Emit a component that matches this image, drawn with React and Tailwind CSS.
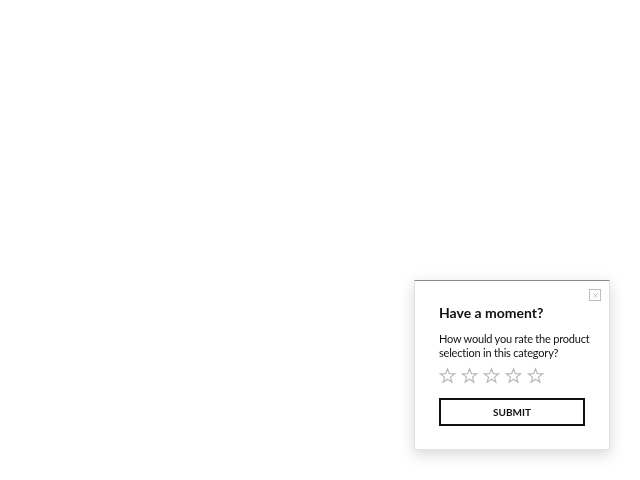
import { X } from "lucide-react";

function Star() {
  return (
    <svg width="17" height="17" viewBox="0 0 24 24" fill="none" stroke="#b5b5b5" strokeWidth="1.6" strokeLinejoin="miter">
      <path d="M12 2.5l2.6 6.9 7.4.3-5.8 4.6 2 7.1L12 17.3l-6.2 4.1 2-7.1L2 9.7l7.4-.3z" />
    </svg>
  );
}

export default function App() {
  return (
    <div className="min-h-screen bg-white" style={{ fontFamily: "Lato, 'Liberation Sans', sans-serif" }}>
      <div className="fixed right-[30px] bottom-[30px] w-[196px] border border-[#e2e2e2] border-t-[#8a8a8a] bg-white shadow-[0_4px_14px_rgba(0,0,0,0.16)]">
        <div className="flex justify-end pt-[8px] pr-[8px]">
          <button type="button" className="flex h-[12px] w-[12px] items-center justify-center border border-[#bdbdbd] text-[#9a9a9a]">
            <X size={7} strokeWidth={2} />
          </button>
        </div>
        <div className="px-[24px] pb-[23px]">
          <h2 className="mt-[3px] text-[14px] font-bold leading-[18px] text-[#111]">Have a moment?</h2>
          <p className="mt-[10px] mr-[-14px] text-[11px] leading-[14px] tracking-[-0.2px] text-[#111]">
            How would you rate the product selection in this category?
          </p>
          <div className="mt-[7px] flex gap-[5px]">
            <Star />
            <Star />
            <Star />
            <Star />
            <Star />
          </div>
          <button
            type="button"
            className="mt-[14px] flex h-[28px] w-full items-center justify-center border-2 border-[#111] text-[10px] font-bold text-[#111]"
          >
            SUBMIT
          </button>
        </div>
      </div>
    </div>
  );
}
